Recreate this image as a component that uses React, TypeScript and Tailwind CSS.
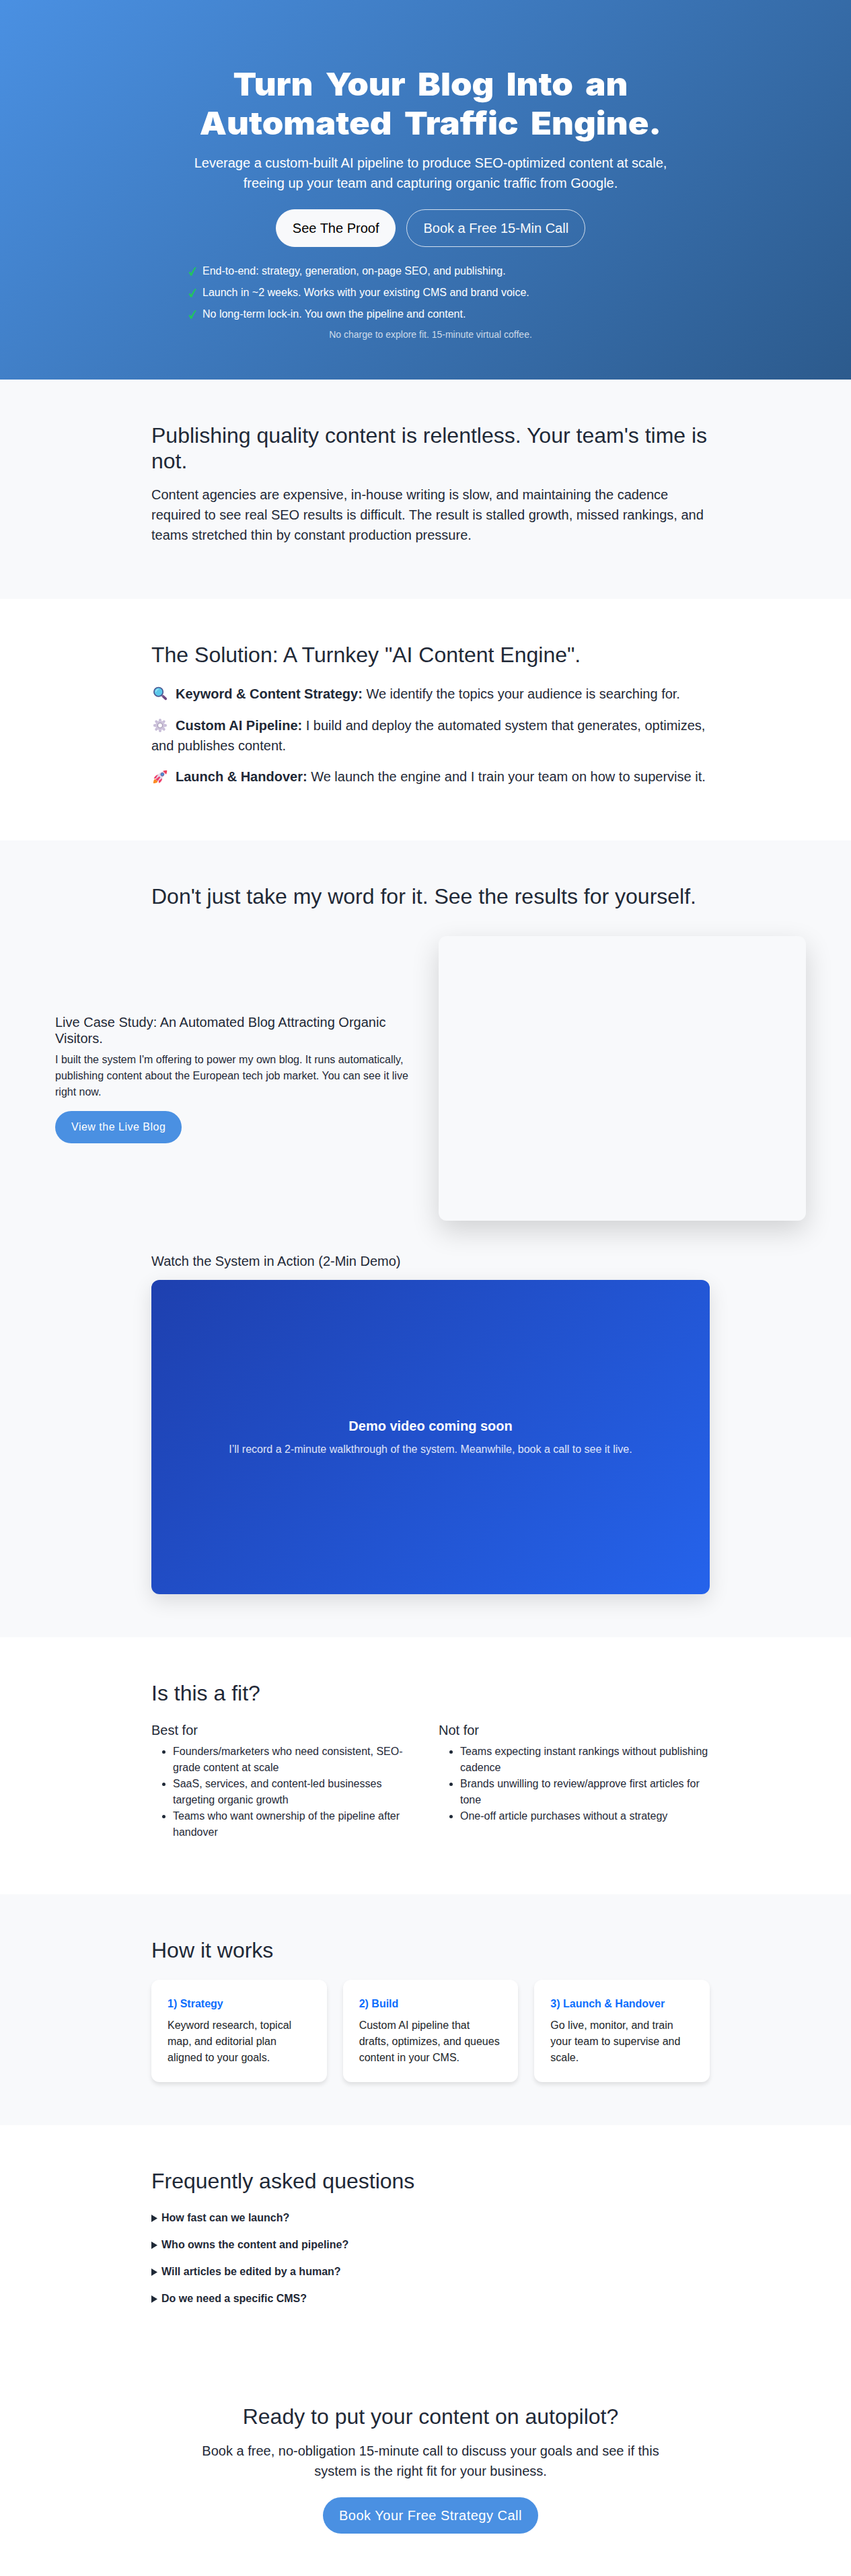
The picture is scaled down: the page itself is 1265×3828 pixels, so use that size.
import React from "react";

const heading = "text-[32px] leading-[38.4px] font-normal";
const lead = "text-[20px] leading-[30px]";

function MagnifierIcon() {
  return (
    <svg viewBox="0 0 22 22" className="w-[22px] h-[22px]" aria-hidden="true">
      <path d="M15 14.400l4.300 4" stroke="#6d4a80" strokeWidth="3.600" strokeLinecap="round" />
      <path d="M13 12.600l2.400 2.400" stroke="#8b6ba0" strokeWidth="2" />
      <circle cx="8.600" cy="8.200" r="6.700" fill="#5bc8ea" stroke="#4c5a94" strokeWidth="1.700" />
      <path d="M4.800 7.800a4 4 0 0 1 3.400-3.600" stroke="#9be4f8" strokeWidth="1.400" fill="none" strokeLinecap="round" />
    </svg>
  );
}

function GearIcon() {
  return (
    <svg viewBox="0 0 22 22" className="w-[22px] h-[22px]" aria-hidden="true">
      <g stroke="#c8bdd8" strokeWidth="3.800" strokeLinecap="round">
        <path d="M11 2.800v16.400M2.800 11h16.400M5.200 5.200l11.600 11.600M16.800 5.200L5.200 16.800" />
      </g>
      <circle cx="11" cy="11" r="6.900" fill="#cfc5dd" />
      <circle cx="11" cy="11" r="4.300" fill="#aca0ba" />
      <circle cx="11" cy="11" r="2.900" fill="#ffffff" />
    </svg>
  );
}

function RocketIcon() {
  return (
    <svg viewBox="0 0 22 22" className="w-[22px] h-[22px]" aria-hidden="true">
      <path d="M1 21c-.2-3 .6-5.400 2.600-6.400l4 3.600C6.800 20 4.500 21.200 1 21z" fill="#fb8b24" />
      <path d="M9.200 8.200C6 8 3.200 9.800 1.600 14l5-.6zM14 13.200c.4 3-1.400 6-5 7.600l-.2-5z" fill="#ef3f6b" />
      <path d="M4.600 14.800C6.400 8.600 11 3.400 19 2c-.6 8-5.600 13-11.800 15.800z" fill="#e3d9ea" />
      <path d="M15.200 2.800c2-.9 4.200-1.300 6-1.100.2 1.900-.3 4-1.300 6z" fill="#ef3f5b" />
      <path d="M4.300 15.200l3 2.600 4-5.500-1.500-1.500z" fill="#ef3f6b" />
      <circle cx="14.300" cy="7.800" r="2.400" fill="#4a90d9" stroke="#6d5b9a" strokeWidth="1" />
    </svg>
  );
}

function Check() {
  return (
    <svg viewBox="0 0 12 13" className="absolute left-0 top-[5.500px] w-[12px] h-[13px]" aria-hidden="true">
      <path d="M0.300 8L2.800 6.700 4.200 9C5.800 5.600 7.800 2.600 9.800.3L12 .3C9.400 4 7.200 8 5.400 12.400L3.100 12.700C2.500 10.900 1.600 9.300.3 8z" fill="#22c55e" />
    </svg>
  );
}

const benefits = [
  "End-to-end: strategy, generation, on-page SEO, and publishing.",
  "Launch in ~2 weeks. Works with your existing CMS and brand voice.",
  "No long-term lock-in. You own the pipeline and content.",
];

const solution = [
  { icon: <MagnifierIcon />, title: "Keyword & Content Strategy:", text: "We identify the topics your audience is searching for." },
  { icon: <GearIcon />, title: "Custom AI Pipeline:", text: "I build and deploy the automated system that generates, optimizes, and publishes content." },
  { icon: <RocketIcon />, title: "Launch & Handover:", text: "We launch the engine and I train your team on how to supervise it." },
];

const fit = [
  {
    title: "Best for",
    items: [
      "Founders/marketers who need consistent, SEO-grade content at scale",
      "SaaS, services, and content-led businesses targeting organic growth",
      "Teams who want ownership of the pipeline after handover",
    ],
  },
  {
    title: "Not for",
    items: [
      "Teams expecting instant rankings without publishing cadence",
      "Brands unwilling to review/approve first articles for tone",
      "One-off article purchases without a strategy",
    ],
  },
];

const steps = [
  { title: "1) Strategy", text: "Keyword research, topical map, and editorial plan aligned to your goals." },
  { title: "2) Build", text: "Custom AI pipeline that drafts, optimizes, and queues content in your CMS." },
  { title: "3) Launch & Handover", text: "Go live, monitor, and train your team to supervise and scale." },
];

const questions = [
  "How fast can we launch?",
  "Who owns the content and pipeline?",
  "Will articles be edited by a human?",
  "Do we need a specific CMS?",
];

export default function App() {
  return (
    <div className="w-full overflow-hidden">
      <div className="w-[1280px] bg-white text-[16px] leading-[24px] text-[#1f2937] font-['Liberation_Sans',Arial,sans-serif]">
        <section className="h-[563.600px] pt-[96px] bg-[linear-gradient(135deg,#4a90e2_0%,#2c5a8c_100%)] text-white">
          <div className="w-[720px] mx-auto text-center">
            <h1 className="font-['Inter',sans-serif] font-black text-[47px] leading-[57.6px] [word-spacing:7.7px] scale-x-[1.078]">
              Turn Your Blog Into an
              <br />
              Automated Traffic Engine.
            </h1>
            <p className={`${lead} mt-4`}>
              Leverage a custom-built AI pipeline to produce SEO-optimized content at scale,
              <br />
              freeing up your team and capturing organic traffic from Google.
            </p>
            <div className="mt-6 flex justify-center gap-4 text-[20px] leading-[30px]">
              <a className="rounded-full border border-[#f8f9fb] bg-[#f8f9fb] text-black px-6 py-3">See The Proof</a>
              <a className="rounded-full border border-[#f8f9fb]/80 text-[#f8f9fb] px-6 py-3">Book a Free 15-Min Call</a>
            </div>
            <ul className="mt-6 text-left">
              {benefits.map((b) => (
                <li key={b} className="relative mb-2 pl-[21px]">
                  <Check />
                  {b}
                </li>
              ))}
            </ul>
            <p className="text-[14px] leading-[21px] text-white/75">No charge to explore fit. 15-minute virtual coffee.</p>
          </div>
        </section>

        <section className="bg-[#f8f9fb] py-16">
          <div className="w-[830px] mx-auto">
            <h2 className={heading}>Publishing quality content is relentless. Your team's time is not.</h2>
            <p className={`${lead} my-4`}>
              Content agencies are expensive, in-house writing is slow, and maintaining the cadence required to see
              real SEO results is difficult. The result is stalled growth, missed rankings, and teams stretched thin by
              constant production pressure.
            </p>
          </div>
        </section>

        <section className="h-[358.200px] pt-16">
          <div className="w-[830px] mx-auto">
            <h2 className={heading}>The Solution: A Turnkey "AI Content Engine".</h2>
            <ul className="mt-[23.500px] text-[20px] leading-[30px]">
              {solution.map((s) => (
                <li key={s.title} className="mb-[16.500px]">
                  <span className="inline-flex w-[36px] h-[22px] pl-[2px] align-[-4px]">{s.icon}</span>
                  <strong className="font-bold">{s.title}</strong> {s.text}
                </li>
              ))}
            </ul>
          </div>
        </section>

        <section className="bg-[#f8f9fb] py-16">
          <h2 className={`${heading} w-[830px] mx-auto`}>Don't just take my word for it. See the results for yourself.</h2>
          <div className="w-[1116px] mx-auto mt-[40px] grid grid-cols-2 gap-6 items-center">
            <div>
              <h3 className="text-[20px] leading-6">Live Case Study: An Automated Blog Attracting Organic Visitors.</h3>
              <p className="mt-2">
                I built the system I'm offering to power my own blog. It runs automatically, publishing content about
                the European tech job market. You can see it live right now.
              </p>
              <a className="mt-4 inline-block rounded-full bg-[#4a90e2] text-white tracking-[0.5px] px-6 py-3">View the Live Blog</a>
            </div>
            <div className="h-[423px] rounded-[12px] bg-[#f8f9fb] shadow-[0_15px_40px_rgba(0,0,0,0.16)]" />
          </div>
          <div className="w-[830px] mx-auto mt-12">
            <h3 className="text-[20px] leading-6">Watch the System in Action (2-Min Demo)</h3>
            <div className="mt-4 h-[466.900px] rounded-[12px] bg-[linear-gradient(135deg,#1e40af,#2563eb)] shadow-[0_10px_30px_rgba(0,0,0,0.12)] flex flex-col items-center justify-center text-white">
              <div className="text-[20px] leading-[30px] font-bold">Demo video coming soon</div>
              <div className="mt-2 leading-6 text-white/85">
                I’ll record a 2-minute walkthrough of the system. Meanwhile, book a call to see it live.
              </div>
            </div>
          </div>
        </section>

        <section className="py-16">
          <div className="w-[830px] mx-auto">
            <h2 className={heading}>Is this a fit?</h2>
            <div className="mt-6 grid grid-cols-2 gap-6">
              {fit.map((f) => (
                <div key={f.title}>
                  <h3 className="text-[20px] leading-6">{f.title}</h3>
                  <ul className="mt-2 mb-4 pl-8">
                    {f.items.map((i) => (
                      <li
                        key={i}
                        className="relative before:absolute before:-left-[16px] before:top-[10px] before:h-[5px] before:w-[5px] before:rounded-full before:bg-[#1f2937] before:content-['']"
                      >
                        {i}
                      </li>
                    ))}
                  </ul>
                </div>
              ))}
            </div>
          </div>
        </section>

        <section className="bg-[#f8f9fb] py-16">
          <div className="w-[830px] mx-auto">
            <h2 className={heading}>How it works</h2>
            <div className="mt-6 grid grid-cols-3 gap-6">
              {steps.map((s) => (
                <div key={s.title} className="rounded-[12px] bg-white p-6 text-[#212529] shadow-[0_4px_6px_rgba(0,0,0,0.1)]">
                  <div className="font-bold text-[#0d6efd]">{s.title}</div>
                  <p className="mt-2">{s.text}</p>
                </div>
              ))}
            </div>
          </div>
        </section>

        <section className="py-16">
          <div className="w-[830px] mx-auto">
            <h2 className={`${heading} mb-6`}>Frequently asked questions</h2>
            {questions.map((q) => (
              <details key={q} className="mb-4">
                <summary className="flex items-center list-none font-bold">
                  <svg viewBox="0 0 15 11" className="w-[15px] h-[11px]" aria-hidden="true">
                    <path d="M0 0L9 5.500 0 11z" fill="currentColor" />
                  </svg>
                  {q}
                </summary>
              </details>
            ))}
          </div>
        </section>

        <section className="py-16">
          <div className="w-[720px] mx-auto text-center">
            <h2 className={heading}>Ready to put your content on autopilot?</h2>
            <p className={`${lead} mt-4`}>
              Book a free, no-obligation 15-minute call to discuss your goals and see if this system is the right fit
              for your business.
            </p>
            <div className="mt-6 flex justify-center">
              <a className="rounded-full bg-[#4a90e2] text-white text-[20px] leading-[30px] tracking-[0.5px] px-6 py-3">Book Your Free Strategy Call</a>
            </div>
          </div>
        </section>
      </div>
    </div>
  );
}
